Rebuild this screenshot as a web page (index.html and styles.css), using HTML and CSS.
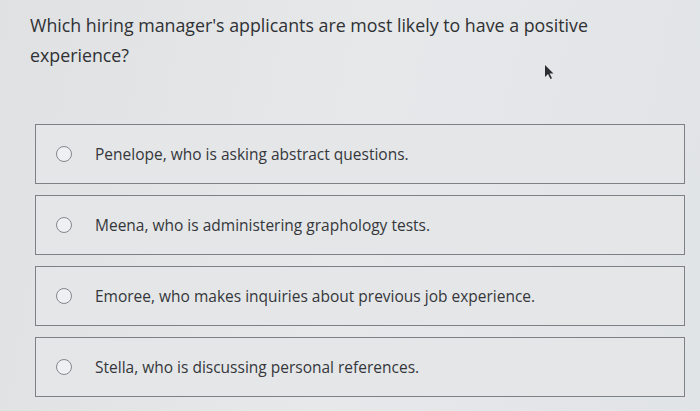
FILE: index.html
```html
<!DOCTYPE html>
<html>
<head>
<meta charset="utf-8">
<link rel="stylesheet" href="styles.css">
</head>
<body>
<div class="page">
  <p class="question">Which hiring manager's applicants are most likely to have a positive experience?</p>
  <div class="options">
    <label class="option"><span class="radio"></span><span class="label">Penelope, who is asking abstract questions.</span></label>
    <label class="option"><span class="radio"></span><span class="label">Meena, who is administering graphology tests.</span></label>
    <label class="option"><span class="radio"></span><span class="label">Emoree, who makes inquiries about previous job experience.</span></label>
    <label class="option"><span class="radio"></span><span class="label">Stella, who is discussing personal references.</span></label>
  </div>
  <svg class="cursor" width="12" height="16" viewBox="0 0 12 16"><path d="M2 1 L2 13 L5 10 L7.5 15 L9 14.3 L6.6 9.5 L10.5 9.5 Z" fill="#2a2d33"/></svg>
</div>
</body>
</html>
```

FILE: styles.css
```css
html, body {
  margin: 0;
  padding: 0;
  background: #e2e4e6;
}
body {
  width: 700px;
  height: 411px;
  overflow: hidden;
  background: linear-gradient(100deg, #dfe1e3 0%, #e6e8ea 50%, #e1e4e6 100%);
  font-family: "Open Sans", "Noto Sans", sans-serif;
  color: #3b3d40;
}
.page {
  position: relative;
  padding: 10px 0 0 30px;
}
.question {
  margin: 0;
  width: 600px;
  font-size: 17.8px;
  line-height: 30px;
  color: #2f3134;
}
.options {
  margin: 54px 0 0 5px;
  width: 650px;
  display: flex;
  flex-direction: column;
  gap: 11px;
}
.option {
  display: flex;
  align-items: center;
  height: 58px;
  border: 1.5px solid #7d8084;
  background: #e4e6e8;
  padding-left: 20px;
  box-sizing: content-box;
}
.radio {
  width: 14px;
  height: 14px;
  border: 1.5px solid #85888b;
  border-radius: 50%;
  background: #eef0f1;
  flex: none;
}
.label {
  margin-left: 23px;
  font-size: 15.5px;
  color: #35373b;
}
.cursor {
  position: absolute;
  left: 543px;
  top: 64px;
}
```
